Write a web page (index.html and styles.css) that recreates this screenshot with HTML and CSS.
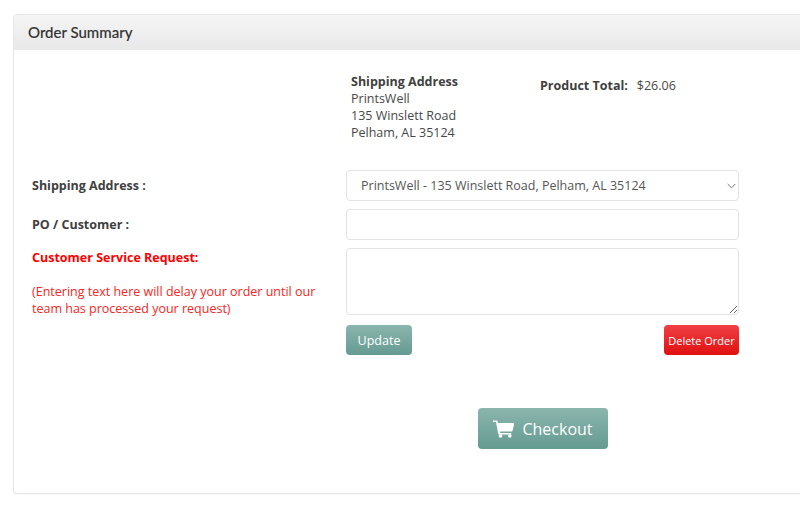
FILE: index.html
```html
<!DOCTYPE html>
<html lang="en">
<head>
<meta charset="utf-8">
<title>Order Summary</title>
<link rel="stylesheet" href="styles.css">
</head>
<body>
<section class="panel">
  <header class="panel-head"><h2>Order Summary</h2></header>
  <div class="panel-body">
    <div class="summary">
      <address class="ship-to">
        <strong>Shipping Address</strong>
        <span>PrintsWell</span>
        <span>135 Winslett Road</span>
        <span>Pelham, AL 35124</span>
      </address>
      <div class="total"><strong>Product Total:</strong><span>$26.06</span></div>
    </div>
    <form class="order-form">
      <label class="lbl lbl-select">Shipping Address :</label>
      <div class="select-wrap">
        <select class="field select"><option>PrintsWell - 135 Winslett Road, Pelham, AL 35124</option></select>
        <svg class="chev" width="9" height="6" viewBox="0 0 9 6"><path d="M.7 1l3.800 3.800L8.300 1" fill="none" stroke="#777" stroke-width="1"/></svg>
      </div>
      <label class="lbl lbl-po">PO / Customer :</label>
      <input class="field input" type="text">
      <div class="request">
        <label class="req-title">Customer Service Request:</label>
        <p class="req-note">(Entering text here will delay your order until our team has processed your request)</p>
      </div>
      <div class="req-col">
        <textarea class="field area"></textarea>
        <div class="actions">
          <button type="button" class="btn btn-teal">Update</button>
          <button type="button" class="btn btn-red">Delete Order</button>
        </div>
      </div>
    </form>
    <div class="checkout-row">
      <button type="button" class="btn btn-teal btn-checkout">
        <svg width="21" height="18" viewBox="0 0 21 18"><path fill="#fff" d="M0 0.5h3.6c.5 0 .9.3 1 .8L5 3h15.2c.6 0 1 .5.9 1.1l-1.6 6.6c-.1.5-.5.8-1 .8H7l.3 1.6h11v1.5H6.200c-.5 0-.9-.3-1-.8L2.900 2H0z"/><circle fill="#fff" cx="7.500" cy="16" r="1.800"/><circle fill="#fff" cx="16.800" cy="16" r="1.800"/></svg>
        <span>Checkout</span>
      </button>
    </div>
  </div>
</section>
</body>
</html>
```

FILE: styles.css
```css
* { box-sizing: border-box; }
html, body { margin: 0; height: 506px; overflow: hidden; background: #fff; }
body {
  padding: 14px 0 0 13px;
  font-family: "Open Sans", sans-serif;
  font-size: 12.5px;
  line-height: 17px;
  color: #484848;
}
.panel {
  height: 480px;
  border: 1px solid #e6e6e6;
  border-right: 0;
  border-radius: 4px 0 0 4px;
  box-shadow: 0 1px 1px rgba(0,0,0,.03);
  background: #fff;
}
.panel-head {
  height: 35px;
  padding: 0 14px;
  display: flex;
  align-items: center;
  background: linear-gradient(#f5f5f5, #e8e8e8);
}
.panel-head h2 {
  margin: 0;
  font-family: Lato, sans-serif;
  font-size: 15px;
  font-weight: 500;
  color: #333;
  -webkit-text-stroke: .1px #333;
}
.panel-body { padding: 23px 0 0 18px; }
.summary { display: flex; padding-left: 319px; height: 74px; }
.ship-to { display: flex; flex-direction: column; font-style: normal; width: 189px; }
.ship-to strong { color: #404040; }
.total { display: flex; gap: 9px; padding-top: 4px; }
.total strong { color: #404040; }
.order-form {
  margin-top: 23px;
  display: grid;
  grid-template-columns: 314px 393px;
  row-gap: 8px;
}
.lbl { font-weight: 700; color: #404040; display: flex; align-items: center; }
.field {
  display: block;
  width: 100%;
  border: 1px solid #e3e3e3;
  border-radius: 4px;
  background: #fff;
  font: inherit;
  color: #555;
  outline: none;
}
.select-wrap { position: relative; }
.select { height: 31px; padding: 0 30px 0 14px; appearance: none; }
.chev { position: absolute; right: 3px; top: 13px; }
.input { height: 31px; }
.request { padding-top: 1px; }
.req-title { display: block; font-weight: 700; color: #f00; }
.req-note { margin: 17px 0 0; width: 300px; color: #f62626; }
.area { height: 67px; resize: vertical; }
.actions { display: flex; justify-content: space-between; margin-top: 10px; }
.btn {
  height: 30px;
  border: 0;
  border-radius: 4px;
  color: #fff;
  font-family: inherit;
  display: inline-flex;
  align-items: center;
  justify-content: center;
}
.btn-teal { background: linear-gradient(#8ab5ad, #659b91); }
.btn-red { background: linear-gradient(#f04045, #e01010); }
.actions .btn-teal { width: 66px; font-size: 12.5px; }
.actions .btn-red { width: 75px; font-size: 11px; padding: 0; }
.checkout-row { padding: 53px 0 0 446px; }
.btn-checkout { width: 130px; height: 41px; font-size: 16px; gap: 8px; }
```
